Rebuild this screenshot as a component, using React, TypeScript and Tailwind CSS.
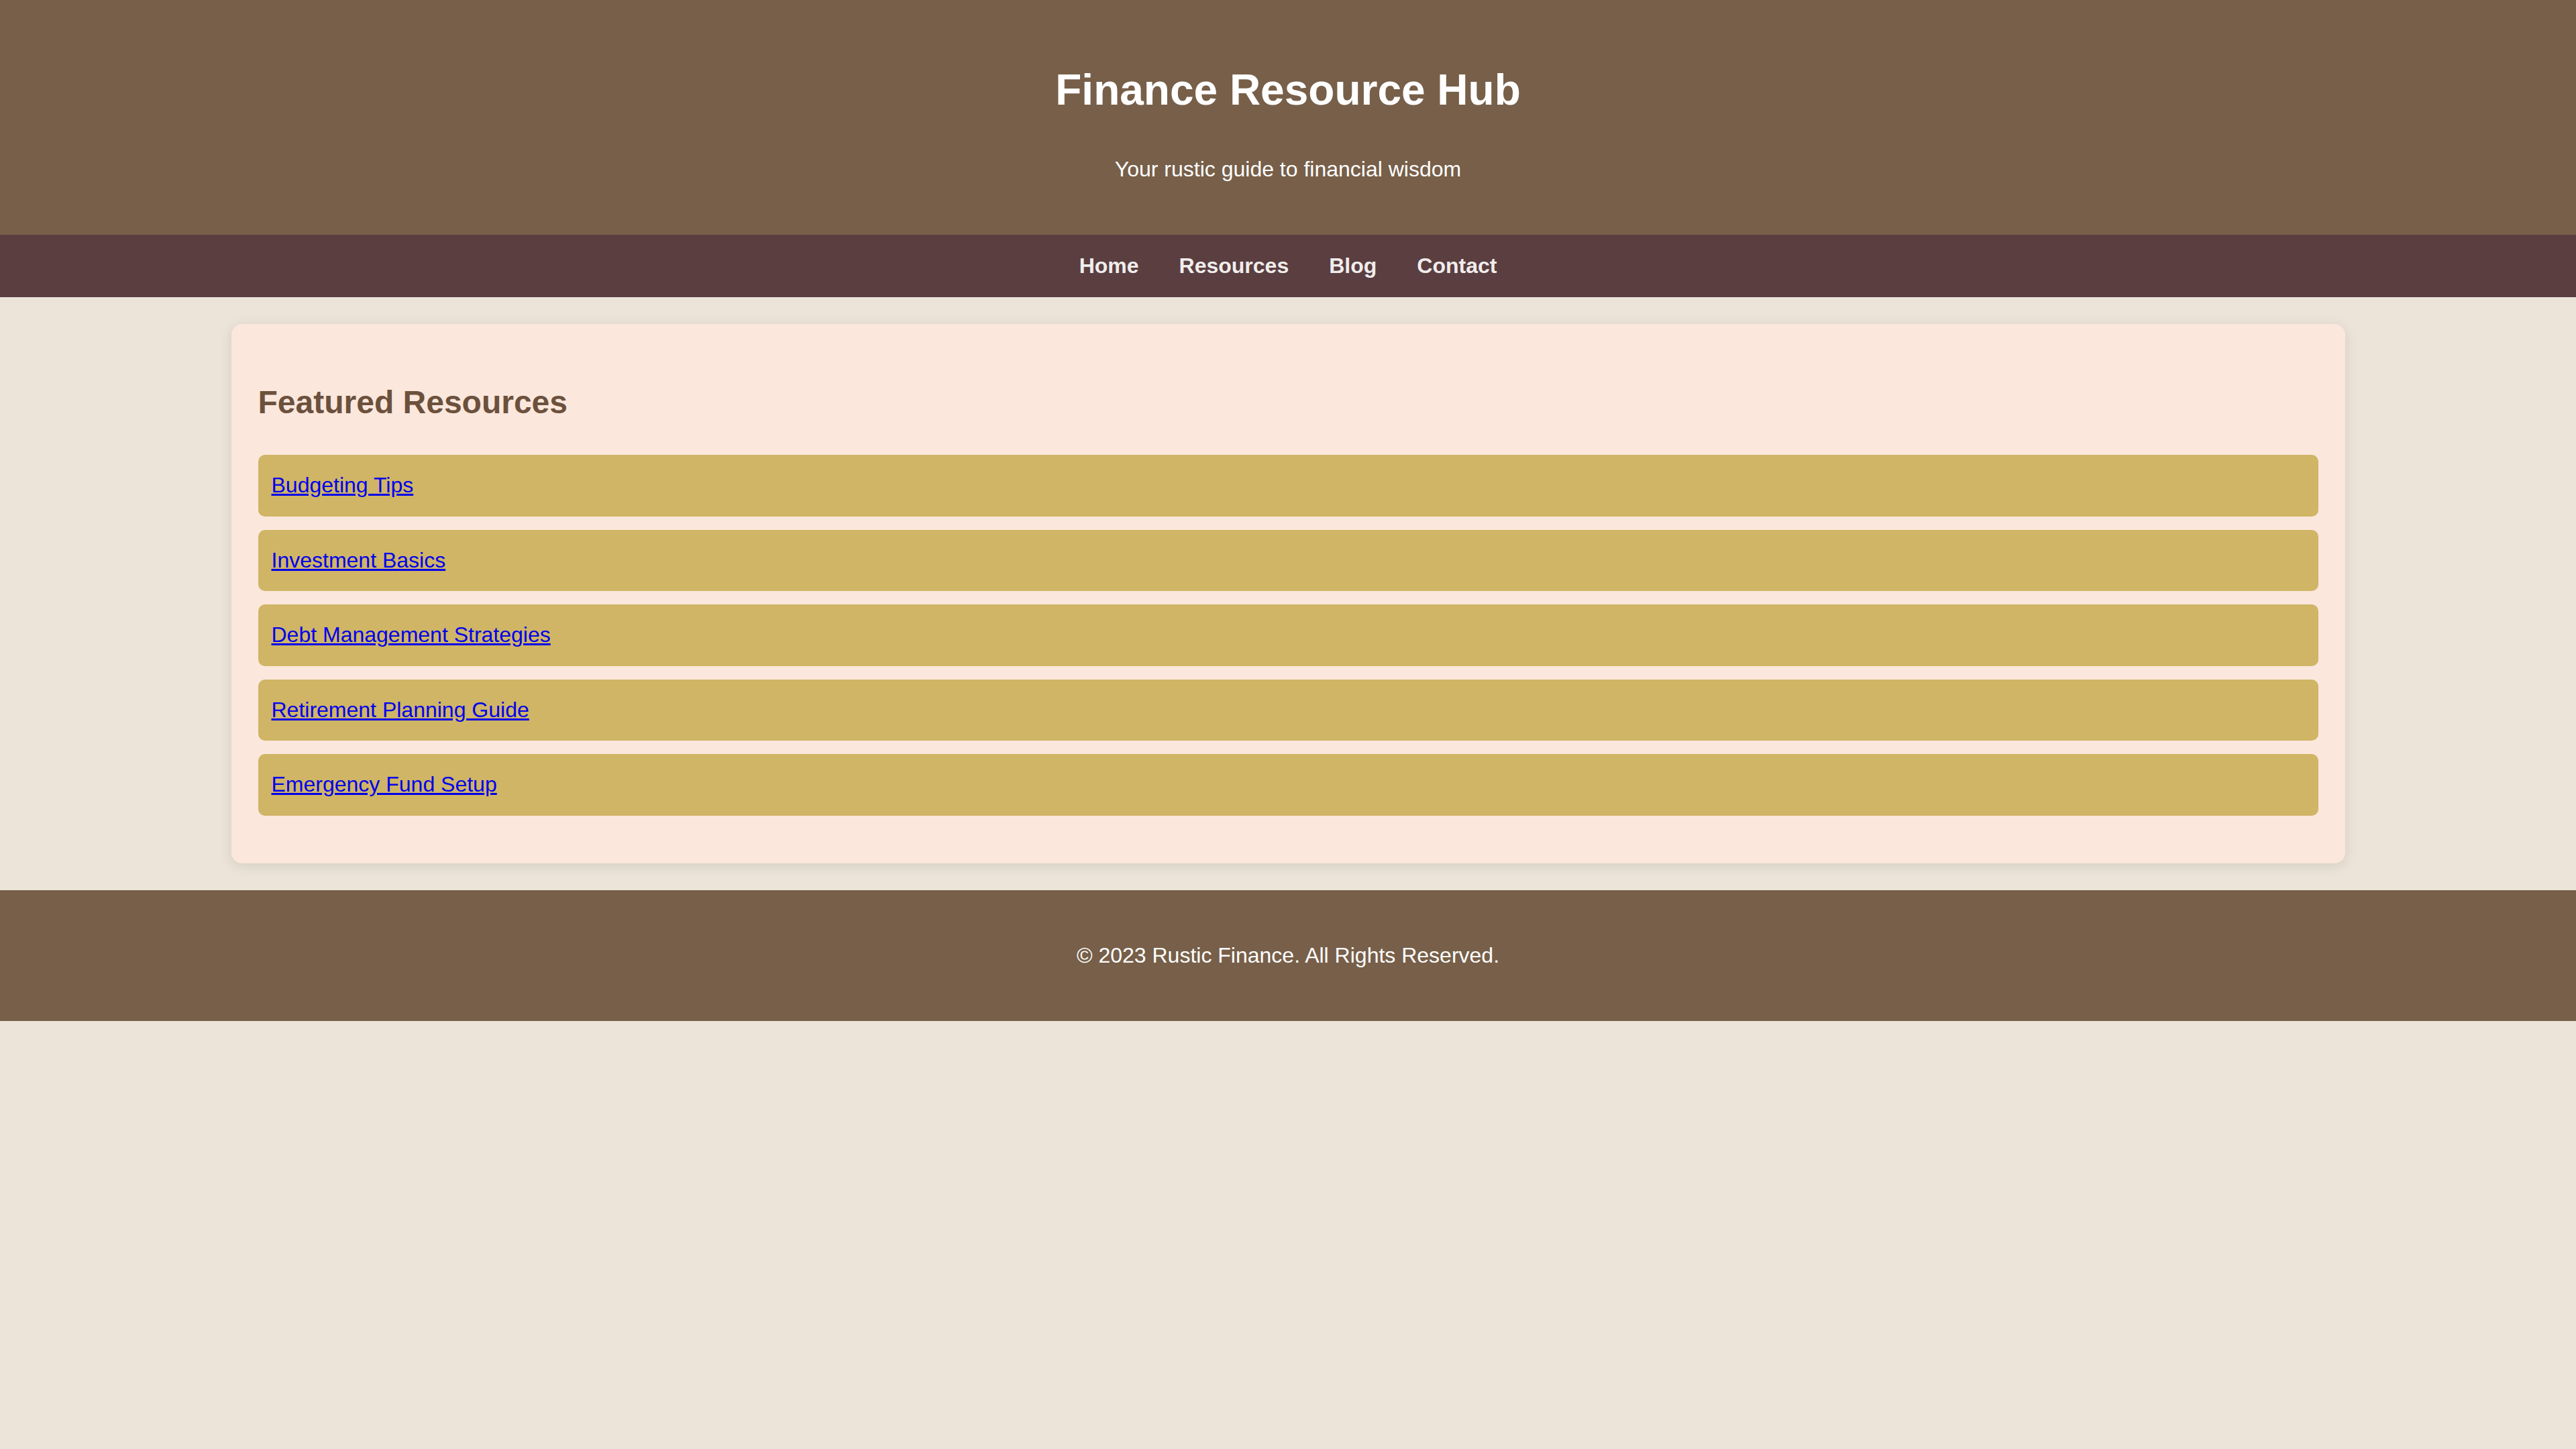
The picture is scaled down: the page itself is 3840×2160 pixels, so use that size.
import React from 'react'

const resources = [
  'Budgeting Tips',
  'Investment Basics',
  'Debt Management Strategies',
  'Retirement Planning Guide',
  'Emergency Fund Setup',
]

const navLinks = ['Home', 'Resources', 'Blog', 'Contact']

export default function App() {
  return (
    <div className="min-h-screen bg-[#ece4d8] font-['Liberation_Sans',Arial,sans-serif]">
      <header className="h-[350px] bg-[#775f49] pt-[97px] text-center text-white">
        <h1 className="text-[64px] leading-[74px] font-bold">Finance Resource Hub</h1>
        <p className="mt-[63px] text-[32px] leading-[36px]">Your rustic guide to financial wisdom</p>
      </header>

      <nav className="flex h-[93px] items-center justify-center gap-[60px] bg-[#5a3e40]">
        {navLinks.map((link) => (
          <a key={link} href="#" className="text-[32px] leading-[37px] font-bold text-[#f1eded]">
            {link}
          </a>
        ))}
      </nav>

      <main className="pt-[40px] pb-[40px]">
        <section className="mx-auto w-[3151px] rounded-[16px] bg-[#fbe7dc] px-[40px] pt-[89px] pb-[71px] shadow-[0_4px_20px_rgba(0,0,0,0.1)]">
          <h2 className="text-[48px] leading-[56px] font-bold text-[#6b513d]">Featured Resources</h2>
          <ul className="mt-[50px] flex flex-col gap-[20px]">
            {resources.map((item) => (
              <li key={item} className="flex h-[91.5px] items-center rounded-[10px] bg-[#cfb565] px-[20px]">
                <a href="#" className="text-[32px] leading-[37px] text-[#0000ee] underline">
                  {item}
                </a>
              </li>
            ))}
          </ul>
        </section>
      </main>

      <footer className="flex h-[195px] items-center justify-center bg-[#775f49] text-white">
        <p className="text-[32px] leading-[37px]">© 2023 Rustic Finance. All Rights Reserved.</p>
      </footer>
    </div>
  )
}
